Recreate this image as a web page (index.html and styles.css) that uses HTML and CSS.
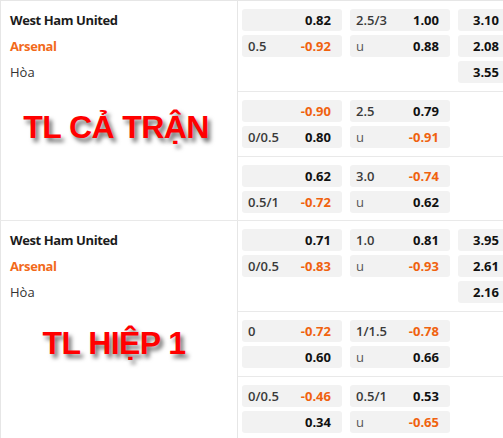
FILE: index.html
```html
<!DOCTYPE html>
<html>
<head>
<meta charset="utf-8">
<link rel="stylesheet" href="styles.css">
</head>
<body>
<div class="board">
  <div class="group">
    <div class="left">
      <div class="names">
        <div class="name home">West Ham United</div>
        <div class="name away">Arsenal</div>
        <div class="name draw">Hòa</div>
      </div>
      <div class="banner banner-full">TL CẢ TRẬN</div>
    </div>
    <div class="right">
      <div class="section">
        <div class="cell"><span class="lbl"></span><span class="val">0.82</span></div>
        <div class="cell"><span class="lbl">2.5/3</span><span class="val">1.00</span></div>
        <div class="cell"><span class="lbl"></span><span class="val">3.10</span></div>
        <div class="cell"><span class="lbl">0.5</span><span class="val neg">-0.92</span></div>
        <div class="cell"><span class="lbl u">u</span><span class="val">0.88</span></div>
        <div class="cell"><span class="lbl"></span><span class="val">2.08</span></div>
        <div class="empty"></div>
        <div class="empty"></div>
        <div class="cell"><span class="lbl"></span><span class="val">3.55</span></div>
      </div>
      <div class="section">
        <div class="cell"><span class="lbl"></span><span class="val neg">-0.90</span></div>
        <div class="cell"><span class="lbl">2.5</span><span class="val">0.79</span></div>
        <div class="empty"></div>
        <div class="cell"><span class="lbl">0/0.5</span><span class="val">0.80</span></div>
        <div class="cell"><span class="lbl u">u</span><span class="val neg">-0.91</span></div>
        <div class="empty"></div>
      </div>
      <div class="section">
        <div class="cell"><span class="lbl"></span><span class="val">0.62</span></div>
        <div class="cell"><span class="lbl">3.0</span><span class="val neg">-0.74</span></div>
        <div class="empty"></div>
        <div class="cell"><span class="lbl">0.5/1</span><span class="val neg">-0.72</span></div>
        <div class="cell"><span class="lbl u">u</span><span class="val">0.62</span></div>
        <div class="empty"></div>
      </div>
    </div>
  </div>
  <div class="group">
    <div class="left">
      <div class="names">
        <div class="name home">West Ham United</div>
        <div class="name away">Arsenal</div>
        <div class="name draw">Hòa</div>
      </div>
      <div class="banner banner-half">TL HIỆP 1</div>
    </div>
    <div class="right">
      <div class="section">
        <div class="cell"><span class="lbl"></span><span class="val">0.71</span></div>
        <div class="cell"><span class="lbl">1.0</span><span class="val">0.81</span></div>
        <div class="cell"><span class="lbl"></span><span class="val">3.95</span></div>
        <div class="cell"><span class="lbl">0/0.5</span><span class="val neg">-0.83</span></div>
        <div class="cell"><span class="lbl u">u</span><span class="val neg">-0.93</span></div>
        <div class="cell"><span class="lbl"></span><span class="val">2.61</span></div>
        <div class="empty"></div>
        <div class="empty"></div>
        <div class="cell"><span class="lbl"></span><span class="val">2.16</span></div>
      </div>
      <div class="section">
        <div class="cell"><span class="lbl">0</span><span class="val neg">-0.72</span></div>
        <div class="cell"><span class="lbl">1/1.5</span><span class="val neg">-0.78</span></div>
        <div class="empty"></div>
        <div class="cell"><span class="lbl"></span><span class="val">0.60</span></div>
        <div class="cell"><span class="lbl u">u</span><span class="val">0.66</span></div>
        <div class="empty"></div>
      </div>
      <div class="section">
        <div class="cell"><span class="lbl">0/0.5</span><span class="val neg">-0.46</span></div>
        <div class="cell"><span class="lbl">0.5/1</span><span class="val">0.53</span></div>
        <div class="empty"></div>
        <div class="cell"><span class="lbl"></span><span class="val">0.34</span></div>
        <div class="cell"><span class="lbl u">u</span><span class="val neg">-0.65</span></div>
        <div class="empty"></div>
      </div>
    </div>
  </div>
</div>
</body>
</html>
```

FILE: styles.css
```css
html, body {
  margin: 0;
  padding: 0;
  background: #ffffff;
}
body {
  width: 503px;
  height: 438px;
  overflow: hidden;
  font-family: "Open Sans", "Noto Sans", sans-serif;
  font-size: 13px;
}
.board {
  width: 503px;
  overflow: hidden;
  border-top: 1px solid #e6e6e6;
}
.group {
  display: flex;
  border-bottom: 1px solid #e9e9e9;
}
.left {
  flex: none;
  width: 236px;
  border-left: 1px solid #e6e6e6;
  border-right: 1px solid #e6e6e6;
  display: flex;
  flex-direction: column;
}
.names {
  padding: 8px 9px 0;
  display: flex;
  flex-direction: column;
  gap: 4px;
}
.name {
  height: 22px;
  line-height: 22px;
  font-size: 13px;
  letter-spacing: -0.4px;
}
.home { font-weight: 700; color: #1c1c1c; }
.away { font-weight: 700; color: #f26a1b; }
.draw { font-weight: 400; color: #333333; letter-spacing: 0; }
.banner {
  font-family: "Liberation Sans", Arial, sans-serif;
  font-weight: 700;
  font-size: 32px;
  line-height: 40px;
  letter-spacing: -0.6px;
  color: #ff0000;
  text-align: center;
  text-shadow: 3px 4px 4px rgba(0, 0, 0, 0.55);
}
.banner-full { margin-top: 24px; padding-right: 6px; }
.banner-half { margin-top: 20px; padding-right: 10px; }
.right {
  flex: none;
  width: 320px;
  display: flex;
  flex-direction: column;
}
.section {
  display: grid;
  grid-template-columns: 100px 100px 52px;
  grid-auto-rows: 22px;
  column-gap: 8px;
  row-gap: 4px;
  padding: 8px 0 8px 4px;
  border-bottom: 1px solid #e9e9e9;
}
.section:last-child {
  border-bottom: none;
  padding-bottom: 7px;
}
.cell {
  background: #f2f2f2;
  border-radius: 3px;
  display: flex;
  align-items: center;
  justify-content: space-between;
  padding: 0 11px 0 6px;
  font-weight: 700;
}
.lbl { color: #3a3a3a; font-weight: 600; }
.lbl.u { color: #555555; font-weight: 400; }
.val { color: #111111; }
.val.neg { color: #f0620f; }
```
